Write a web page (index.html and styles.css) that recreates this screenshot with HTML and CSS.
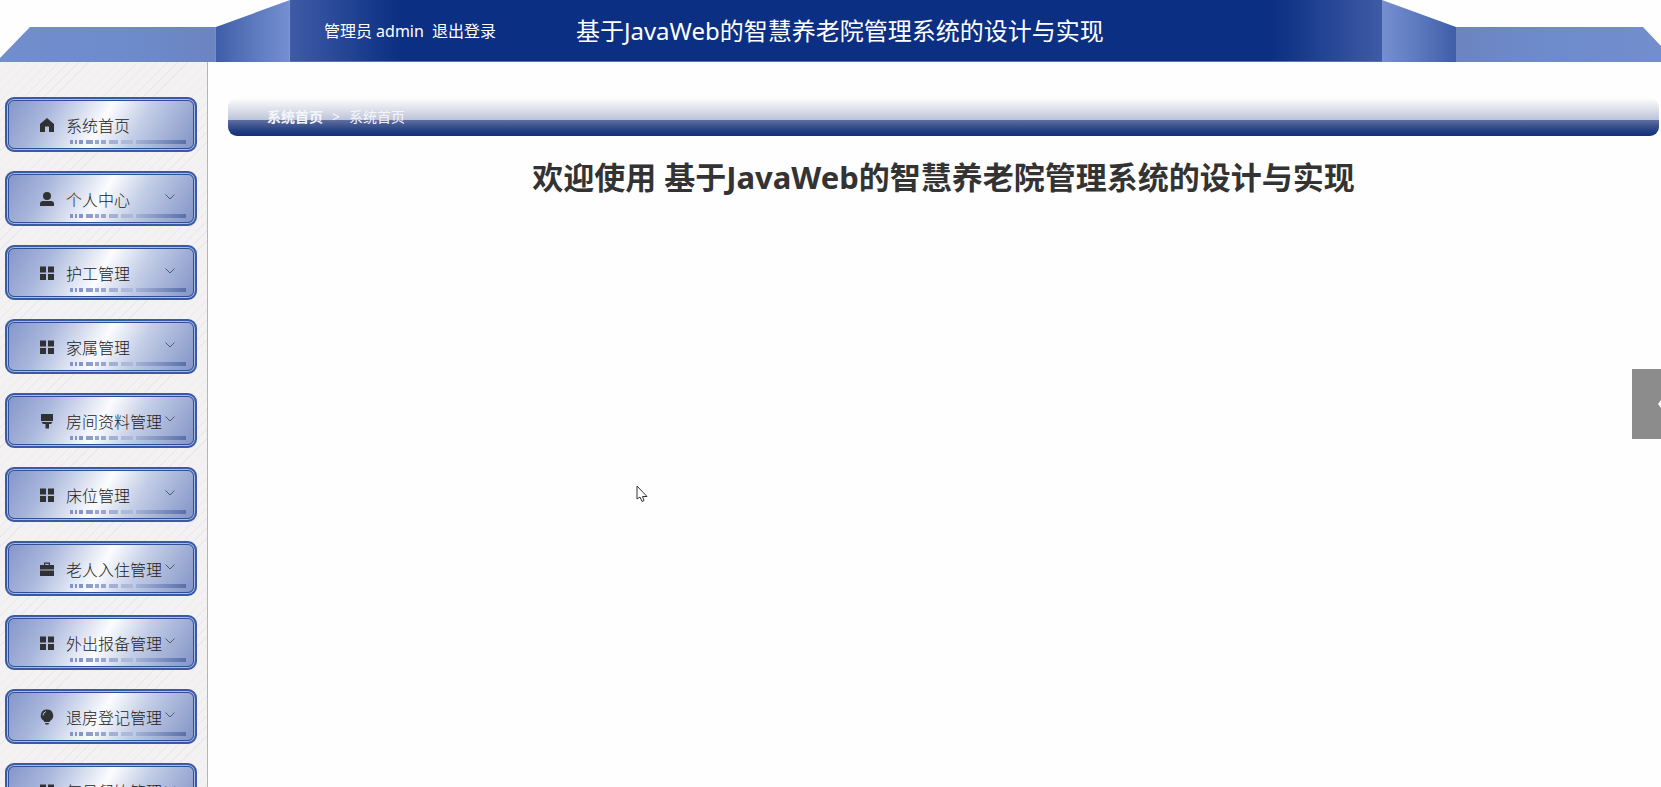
FILE: index.html
```html
<!DOCTYPE html>
<html lang="zh-CN">
<head>
    <meta charset="UTF-8">
    <meta name="viewport" content="width=device-width, initial-scale=1.0">
    <title>基于JavaWeb的智慧养老院管理系统的设计与实现</title>
    <link rel="stylesheet" href="styles.css">
</head>
<body>
    <svg class="sprite" aria-hidden="true">
        <symbol id="icon-home" viewBox="0 0 16 16"><path d="M8 1 L15 7 V15 H10 V9.5 H6 V15 H1 V7 Z"/></symbol>
        <symbol id="icon-user" viewBox="0 0 16 16"><circle cx="8" cy="5" r="4"/><path d="M1 15 V13 Q1 10 4 10 H12 Q15 10 15 13 V15 Z"/></symbol>
        <symbol id="icon-grid" viewBox="0 0 16 16"><path d="M1 1.5h6v6H1zM9 1.5h6v6H9zM1 9h6v6H1zM9 9h6v6H9z"/></symbol>
        <symbol id="icon-brush" viewBox="0 0 16 16"><path d="M2 1h12v7H2zM2.5 9h11L12 11H10v4.500H6.500V11H4z"/></symbol>
        <symbol id="icon-case" viewBox="0 0 16 16"><path d="M1 4h4V1.500h6V4h4v4.500H1zM6.200 2.700V4h3.600V2.700zM1 9.500h14V15H1z" fill-rule="evenodd"/></symbol>
        <symbol id="icon-bulb" viewBox="0 0 16 16"><path d="M8 .500a6 6 0 0 1 3.500 11L10.500 13H5.500L4.500 11.500A6 6 0 0 1 8 .500zM6 14h4l-.500 1.500h-3z"/><path class="shine" d="M4 6.500Q4 3.500 7 2.500"/></symbol>
        <symbol id="icon-arrow" viewBox="0 0 10 6"><path d="M.500.500 5 5 9.500.500"/></symbol>
    </svg>

    <header class="header">
        <svg class="wing wing-left" viewBox="0 0 216 62" preserveAspectRatio="none" aria-hidden="true">
            <defs>
                <linearGradient id="wingFill">
                    <stop offset="0" stop-color="#728ecd"/>
                    <stop offset=".6" stop-color="#6d8aca"/>
                    <stop offset="1" stop-color="#6c85c1"/>
                </linearGradient>
            </defs>
            <path d="M0 58 30 27H216V62H0Z" fill="url(#wingFill)"/>
        </svg>
        <div class="fold fold-left"></div>
        <div class="header-main">
            <nav class="user-nav">
                <span>管理员 admin</span>
                <a href="#">退出登录</a>
            </nav>
            <div class="title">基于JavaWeb的智慧养老院管理系统的设计与实现</div>
        </div>
        <div class="fold fold-right"></div>
        <svg class="wing wing-right" viewBox="0 0 205 62" preserveAspectRatio="none" aria-hidden="true">
            <defs>
                <linearGradient id="wingFillRight">
                    <stop offset="0" stop-color="#6c85c1"/>
                    <stop offset=".4" stop-color="#6d8aca"/>
                    <stop offset="1" stop-color="#728ecd"/>
                </linearGradient>
            </defs>
            <path d="M0 27H187L205 46V62H0Z" fill="url(#wingFillRight)"/>
        </svg>
    </header>

    <div class="layout">
        <aside class="sidebar">
            <ul class="menu">
                <li><a class="menu-item" href="#"><svg class="icon"><use href="#icon-home"/></svg><span>系统首页</span></a></li>
                <li><a class="menu-item" href="#"><svg class="icon"><use href="#icon-user"/></svg><span>个人中心</span><svg class="arrow"><use href="#icon-arrow"/></svg></a></li>
                <li><a class="menu-item" href="#"><svg class="icon"><use href="#icon-grid"/></svg><span>护工管理</span><svg class="arrow"><use href="#icon-arrow"/></svg></a></li>
                <li><a class="menu-item" href="#"><svg class="icon"><use href="#icon-grid"/></svg><span>家属管理</span><svg class="arrow"><use href="#icon-arrow"/></svg></a></li>
                <li><a class="menu-item" href="#"><svg class="icon"><use href="#icon-brush"/></svg><span>房间资料管理</span><svg class="arrow"><use href="#icon-arrow"/></svg></a></li>
                <li><a class="menu-item" href="#"><svg class="icon"><use href="#icon-grid"/></svg><span>床位管理</span><svg class="arrow"><use href="#icon-arrow"/></svg></a></li>
                <li><a class="menu-item" href="#"><svg class="icon"><use href="#icon-case"/></svg><span>老人入住管理</span><svg class="arrow"><use href="#icon-arrow"/></svg></a></li>
                <li><a class="menu-item" href="#"><svg class="icon"><use href="#icon-grid"/></svg><span>外出报备管理</span><svg class="arrow"><use href="#icon-arrow"/></svg></a></li>
                <li><a class="menu-item" href="#"><svg class="icon"><use href="#icon-bulb"/></svg><span>退房登记管理</span><svg class="arrow"><use href="#icon-arrow"/></svg></a></li>
                <li><a class="menu-item" href="#"><svg class="icon"><use href="#icon-grid"/></svg><span>每日餐饮管理</span><svg class="arrow"><use href="#icon-arrow"/></svg></a></li>
            </ul>
        </aside>

        <main class="content">
            <nav class="breadcrumb">
                <a href="#">系统首页</a>
                <span class="separator">&gt;</span>
                <span>系统首页</span>
            </nav>
            <h1>欢迎使用 基于JavaWeb的智慧养老院管理系统的设计与实现</h1>
        </main>
    </div>

    <button class="drawer-btn" aria-label="展开">
        <svg viewBox="0 0 3 8"><path d="M3 0v8L0 4z"/></svg>
    </button>
    <svg class="cursor" viewBox="0 0 12 18" aria-hidden="true"><path d="M1 1V14L4 12 6 16.500 8 15.500 6.500 11.500H11Z"/></svg>
</body>
</html>
```
FILE: styles.css
```css
* {
    box-sizing: border-box;
}

body {
    margin: 0;
    height: 100vh;
    overflow: hidden;
    display: flex;
    flex-direction: column;
    background: #fefefe;
    color: #333;
    font-family: "Noto Sans", "Noto Sans CJK SC", sans-serif;
    font-size: 16px;
}

a {
    color: inherit;
    text-decoration: none;
}

.sprite {
    display: none;
}

/* header */
.header {
    display: flex;
    flex-shrink: 0;
    height: 62px;
    color: #fff;
}

.wing {
    flex-shrink: 0;
    height: 100%;
}

.wing-left {
    width: 13%;
}

.wing-right {
    flex: 0 0 205px;
    width: 205px;
}

.fold {
    flex: 0 0 74px;
}

.fold-left {
    background: linear-gradient(to right, #3f5da8, #5c79be 50%, #7590d0);
    clip-path: polygon(0 27px, 100% 0, 100% 100%, 0 100%);
}

.fold-right {
    background: linear-gradient(to left, #3f5da8, #5c79be 50%, #7590d0);
    clip-path: polygon(0 0, 100% 27px, 100% 100%, 0 100%);
}

.header-main {
    flex: 1;
    display: flex;
    align-items: center;
    gap: 80px;
    padding: 0 0 2px 34px;
    background: linear-gradient(to right, #3f5ba6, #0b2f83 110px, #0b2f83 calc(100% - 110px), #3f5ba6);
    border-bottom: 1px solid #5a73a8;
    white-space: nowrap;
}

.user-nav {
    display: flex;
    gap: 8px;
}

.title {
    font-size: 24px;
}

/* sidebar */
.layout {
    flex: 1;
    display: flex;
    min-height: 0;
}

.sidebar {
    flex: 0 0 208px;
    padding: 35px 10px 0 5px;
    overflow: hidden;
    border-right: 1px solid #a9b4d6;
    background: repeating-linear-gradient(135deg, #f3f1f2 0, #f3f1f2 6px, #e4e3e6 7px);
}

.menu {
    display: grid;
    gap: 19px;
    margin: 0;
    padding: 0;
    list-style: none;
}

.menu-item {
    position: relative;
    display: flex;
    align-items: center;
    height: 55px;
    padding: 0 20px 0 32px;
    border: 2px solid #3a5ba3;
    border-radius: 9px;
    background: linear-gradient(120deg, #8295c9 0%, #a9b7dc 22%, #fbfcfe 50%, #c3cde6 68%, #8092c6 100%);
    box-shadow: inset 0 0 0 1px #a9bbe2, inset 0 0 0 2px #2f5199;
    white-space: nowrap;
}

/* dashed strip under the label */
.menu-item::after {
    content: "";
    position: absolute;
    right: 9px;
    bottom: 6px;
    width: 116px;
    height: 4px;
    background:
        linear-gradient(#8294c3, #8294c3) 0 0 / 3px 4px no-repeat,
        linear-gradient(#8294c3, #8294c3) 5px 0 / 2px 4px no-repeat,
        linear-gradient(#8294c3, #8294c3) 9px 0 / 4px 4px no-repeat,
        linear-gradient(#8e9eca, #8e9eca) 16px 0 / 7px 4px no-repeat,
        linear-gradient(#98a7cf, #98a7cf) 25px 0 / 4px 4px no-repeat,
        linear-gradient(#98a7cf, #98a7cf) 31px 0 / 5px 4px no-repeat,
        linear-gradient(#a2b0d5, #a2b0d5) 39px 0 / 9px 4px no-repeat,
        linear-gradient(#adb9da, #adb9da) 51px 0 / 12px 4px no-repeat,
        linear-gradient(to right, #a5b2d6, #5870aa) 66px 0 / 50px 4px no-repeat;
}

.menu-item span {
    color: #222;
    font-weight: 300;
}

.icon {
    flex-shrink: 0;
    width: 16px;
    height: 16px;
    margin-right: 11px;
    fill: #303133;
}

.shine {
    fill: none;
    stroke: #b9c3dd;
}

.arrow {
    flex-shrink: 0;
    width: 10px;
    height: 6px;
    margin: 0 0 3px auto;
    fill: none;
    stroke: #4f5a7a;
}

/* content */
.content {
    flex: 1;
    padding: 36px 2px 0 20px;
}

.breadcrumb {
    display: flex;
    align-items: center;
    gap: 9px;
    height: 38px;
    padding: 0 39px 2px;
    border-radius: 9px;
    background: linear-gradient(to bottom, #fdfdfd, #d9dce8 13px, #bcc3d7 22px, #5f70a0 22px, #274184 32px, #0f2f7c);
    color: #f4f6fb;
    font-size: 14px;
}

.breadcrumb a {
    font-weight: 700;
}

h1 {
    margin: 19px 0 0;
    font-size: 31px;
    line-height: 44px;
    text-align: center;
    white-space: nowrap;
}

/* floating drawer handle */
.drawer-btn {
    position: fixed;
    top: 369px;
    right: 0;
    display: flex;
    align-items: center;
    justify-content: flex-end;
    width: 29px;
    height: 70px;
    padding: 0;
    border: 0;
    background: #8c8c8c;
}

.drawer-btn svg {
    width: 3px;
    height: 8px;
    fill: #fff;
}

.cursor {
    position: fixed;
    top: 485px;
    left: 636px;
    width: 12px;
    height: 18px;
    fill: #fff;
    stroke: #333;
}
```
